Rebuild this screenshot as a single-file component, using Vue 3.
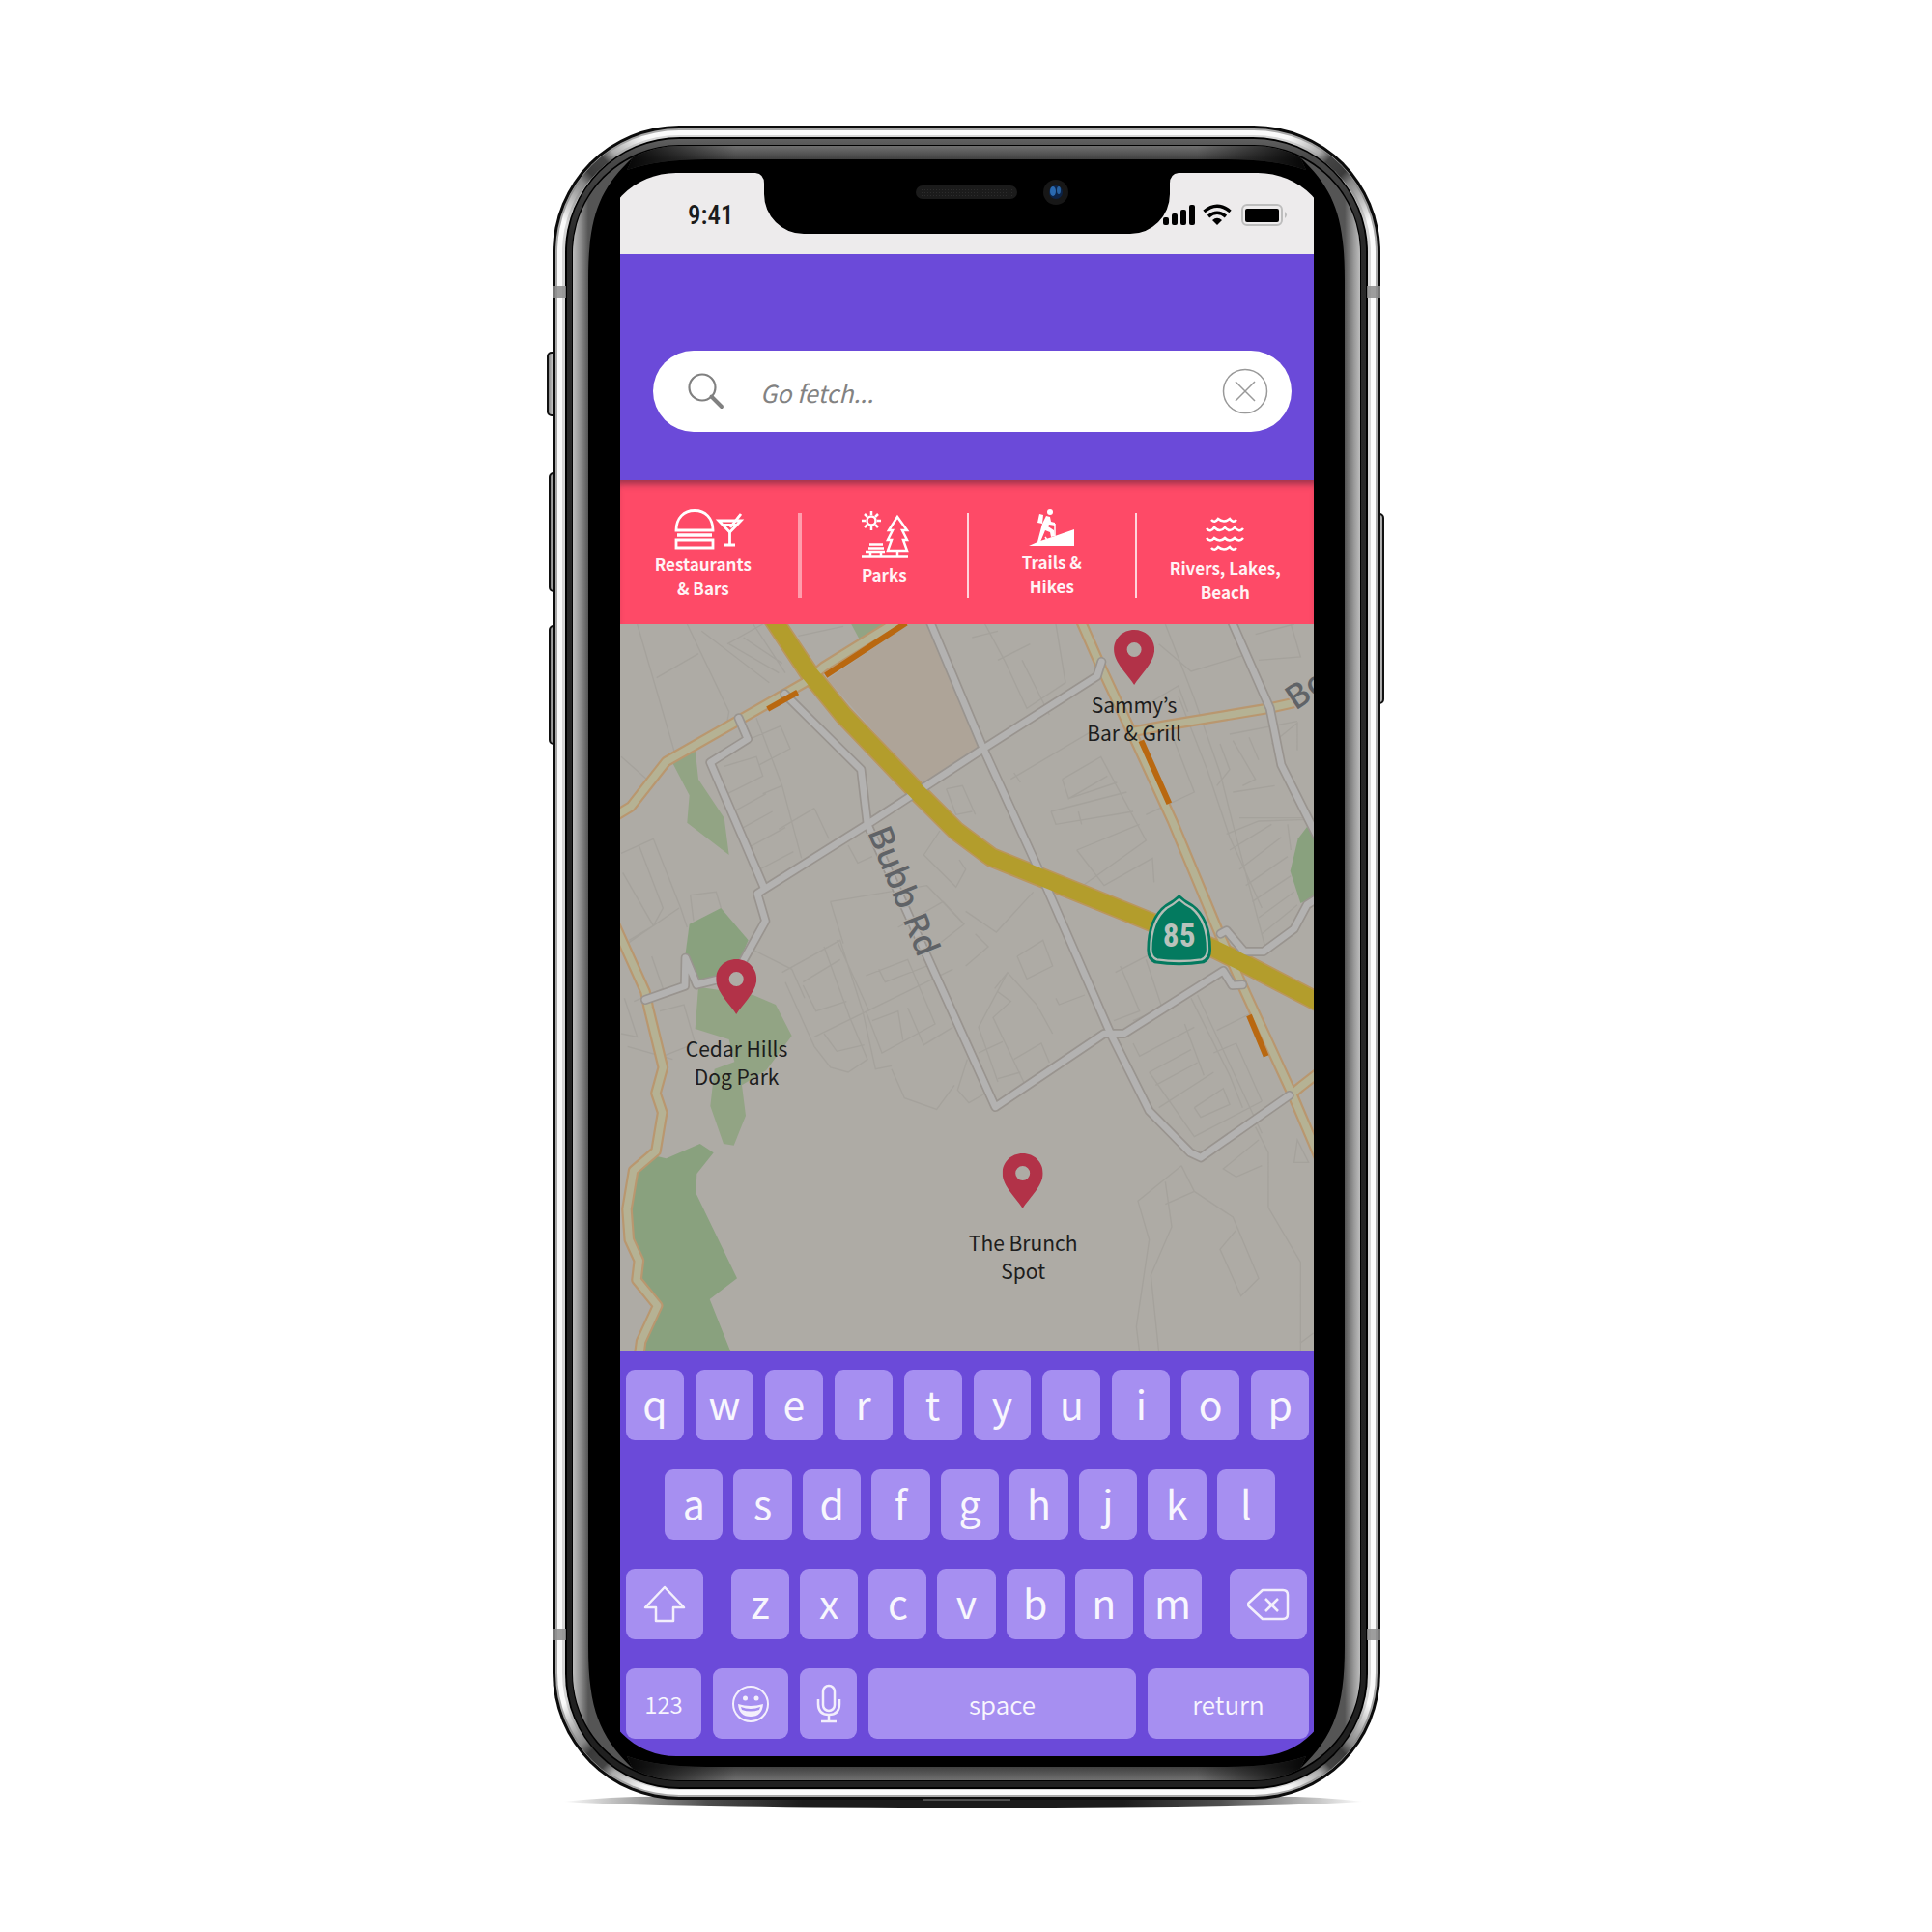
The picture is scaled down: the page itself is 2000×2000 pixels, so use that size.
<script setup>
import { ref } from 'vue'

const query = ref('')

const letterRows = {
  top: [...'qwertyuiop'],
  home: [...'asdfghjkl'],
  bottom: [...'zxcvbnm']
}

const places = [
  { id: 'sammys', lines: ['Sammy’s', 'Bar & Grill'], left: '74.1%', top: '6px', close: true },
  { id: 'cedar', lines: ['Cedar Hills', 'Dog Park'], left: '16.8%', top: '347px', close: false },
  { id: 'brunch', lines: ['The Brunch', 'Spot'], left: '58.1%', top: '548px', close: false }
]

const corners = ['', 'translate(2001 0) scale(-1 1)', 'translate(0 1993) scale(1 -1)', 'translate(2001 1993) scale(-1 -1)']

const parks = [
  'M715 0L750 65L860 0Z',
  'M170 450L240 410L250 500L330 620L345 735L215 635L222 550Z',
  'M250 1145L420 1170L490 1200L540 1297L460 1405L385 1450L397 1545L360 1637L328 1632L287 1515L300 1400L362 1378L345 1308L240 1275Z'
]
const woods = [
  'M222 950L320 900L405 1000L370 1080L340 1120L255 1125L210 1040Z',
  'M118 1670L150 1678L255 1632L297 1660L245 1725L242 1785L370 2050L285 2115L355 2290H70L123 2135L60 2050L30 1850L50 1720Z',
  'M2140 648L2170 680V860L2120 885L2088 785L2112 685Z'
]
const lanes = [
  'M60 18L180 430M215 18L345 290L340 320M120 185L250 110M345 80L500 170M10 430L90 500M260 40L470 200M340 80L450 18M420 18L520 170M390 60L510 140M560 55L700 25',
  'M430 310L510 520L450 545M510 520L570 745M330 460L430 430L450 490L340 545M460 545L360 600M480 600L380 655M520 650L410 710M610 590L655 685M610 590L500 655M545 725L440 780M410 375L505 335L535 405L440 455',
  'M10 730L110 685L195 900L215 960M65 705L140 900L110 955M15 790L110 955L35 1000M225 860L305 850L320 900M225 860L235 940M30 1010L190 900M105 1050L140 1150L50 1190',
  'M660 880L960 830L1075 950L960 1040M660 880L700 1010M400 1020L540 1090L580 1180M510 1100L690 1000L760 1220L800 1400L850 1390M575 1130L690 1060M640 1020L720 1240L775 1370L715 1410L660 1395L610 1330L520 1130M680 1000L780 1220M575 1140L615 1220L710 1190M610 1300L1040 1090',
  'M770 1110L900 1060L985 1260L820 1350L770 1220M810 1090L830 1130L960 1080M900 1210L950 1325L1040 1270M790 1250L870 1220L885 1310M640 1290L680 1345L765 1325M850 1400L890 1490L990 1525L1045 1450M1085 1370L1055 1465L1090 1505L1150 1470',
  'M715 705L745 760L790 740M950 735L1000 660M950 735L1050 835L1080 780L1060 750M1020 530L1070 520L1110 610M1020 530L1050 610L1100 600M870 960L1010 880L1075 950M30 1330L170 1370M20 1180L60 1300L10 1290M130 1220L205 1200L240 1320L140 1360',
  'M1140 18L1200 130L1270 280L1390 200L1360 18M1180 130L1280 80M1255 130L1340 300M1100 60L1180 40M1220 500L1490 340M1230 480L1250 510M1380 500L1500 430L1640 690L1430 840M1380 500L1400 560L1520 490M1400 560L1550 510M1345 600L1580 540M1345 600L1360 640L1600 600M1430 600L1440 640M1425 720L1620 640M1425 720L1510 830L1660 745L1665 820',
  'M1700 18L1790 250L1870 480L1910 640L1960 830L2010 1020M1680 80L1780 165L1960 110M1740 240L1830 470L1900 680L2000 900M1720 360L1790 540L1640 610M1640 270L1740 210L1770 290M1900 360L2110 320M1870 390L1900 470L1860 520M1910 380L1980 500L1940 520M1960 370L1990 440M2030 390L2110 325V410M1910 540L2040 520M1930 620L2140 620M1890 670L1990 630L2140 625M1900 720L2030 640M1930 780L2060 680M1950 830L2080 740M1970 880L2090 800M1990 930L2100 850M2000 980L2110 890M2090 18L2120 120L1990 130M1980 50L2100 18M2080 640L2090 720',
  'M1080 910L1175 975L1290 850M1080 1080L1150 1020L1110 980M1170 1150L1210 1100L1300 1200L1350 1290M1240 1050L1320 1000L1350 1080L1270 1120L1240 1050M1210 1100L1120 1270L1180 1440M1180 1160L1220 1190L1165 1240L1260 1440M1120 1350L1195 1315M1230 1370L1315 1320L1340 1380M1360 1180L1370 1200L1450 1170M1545 1100L1660 1040M1560 1080L1620 1220L1540 1250M1640 1060L1690 1210L1600 1250M1180 1430L1250 1410',
  'M1600 1320L1620 1360L1790 1270M1650 1410L1780 1340M1670 1450L1800 1380M1680 1520L1850 1410M1650 1410L1790 1610L2000 1500M1760 1260L1820 1420M1780 1180L1900 1420L1940 1520M1800 1170L2000 1600M1850 1350L1920 1320L2000 1500M1790 1520L1880 1460L1900 1510L1810 1550L1790 1520M1860 1280L1960 1230',
  'M1750 1700L1615 1810L1650 1930L1610 2200L1620 2280M1700 1750L1720 1890L1655 2040L1680 2280M1750 1700L1790 1780L1700 1820M1790 1780L1910 1860L1990 2050L1935 2105L1870 1960L1920 1900M1980 1580L2020 1660V1830L2120 2000V2280M1990 1620L1880 1710L1920 1735L2000 1700M2110 1620L2100 1690H2145ZM2120 2250L2160 2220'
]
const greyRoads = [
  'M375 310L403 375L287 448L452 832',
  'M390 1062L458 940L433 855L775 640L1135 405L1488 180L1502 135',
  'M85 1185L208 1142L210 1055L245 1138L310 1122',
  'M518 235L755 470L775 640L1172 1518L1510 1290L1572 1290L1880 1095L1908 1140L1940 1138',
  'M965 0L1135 405L1320 810L1530 1290L1650 1530L1778 1660L1810 1675L2085 1482',
  'M1902 0L2025 280L2060 455L2170 675',
  'M1872 980L1890 970L1945 1035H2005L2100 965L2140 890L2175 868'
]
const creamRoads = [
  'M-10 615L40 585L150 445L580 200L640 150L870 8',
  'M1434 0L1502 155L1614 395L1722 630L1870 985L1950 1165L2095 1480L2180 1680',
  'M1600 352L1700 333L2020 280L2100 262',
  'M-10 950L85 1160L95 1210L140 1395L118 1475L138 1535L118 1655L48 1715L28 1835L35 1930L65 1995L58 2055L123 2135L72 2245L66 2290',
  'M2090 1480L2120 1455L2180 1408'
]
const highway = 'M480 0L590 165L700 300L930 540L1050 660L1160 742L1660 945L1850 1025L1960 1080L2190 1200'
const traffic = 'M645 178L895 14M465 282L558 230M1625 380L1712 575M1960 1233L2013 1360'
</script>

<template>
  <main class="page">
    <div class="device">
      <svg class="frame" viewBox="560 120 880 1760" preserveAspectRatio="none" aria-hidden="true">
        <defs>
          <linearGradient id="sideL" gradientUnits="userSpaceOnUse" x1="593" x2="609" y1="0" y2="0">
            <stop offset="0" stop-color="#bdbdbd" /><stop offset=".4" stop-color="#999" /><stop offset="1" stop-color="#555" />
          </linearGradient>
          <linearGradient id="sideR" gradientUnits="userSpaceOnUse" x1="1408" x2="1392" y1="0" y2="0">
            <stop offset="0" stop-color="#bdbdbd" /><stop offset=".4" stop-color="#999" /><stop offset="1" stop-color="#555" />
          </linearGradient>
          <linearGradient id="bandT" gradientUnits="userSpaceOnUse" x1="0" x2="0" y1="151" y2="165">
            <stop offset="0" stop-color="#707070" /><stop offset="1" stop-color="#404040" />
          </linearGradient>
          <linearGradient id="bandFade" x1="0" x2="1" y1="0" y2="0">
            <stop offset="0" stop-color="#000" stop-opacity=".9" /><stop offset=".16" stop-color="#000" stop-opacity="0" />
            <stop offset=".84" stop-color="#000" stop-opacity="0" /><stop offset="1" stop-color="#000" stop-opacity=".9" />
          </linearGradient>
          <linearGradient id="ring" x1="0" x2="0" y1="0" y2="1">
            <stop offset="0" stop-color="#606060" /><stop offset=".01" stop-color="#4a4a4a" />
            <stop offset=".06" stop-color="#2a2a2a" /><stop offset="1" stop-color="#202020" />
          </linearGradient>
          <linearGradient id="glint" gradientUnits="userSpaceOnUse" x1="580" y1="225" x2="665" y2="140">
            <stop offset="0" stop-color="#777" stop-opacity="0" /><stop offset=".35" stop-color="#888" />
            <stop offset=".45" stop-color="#3a3a3a" /><stop offset=".62" stop-color="#444" />
            <stop offset=".72" stop-color="#999" stop-opacity=".8" /><stop offset="1" stop-color="#999" stop-opacity="0" />
          </linearGradient>
          <linearGradient id="ground" x1="0" x2="1" y1="0" y2="0">
            <stop offset="0" stop-color="#222" stop-opacity="0" /><stop offset=".18" stop-color="#222" stop-opacity=".8" />
            <stop offset=".3" stop-color="#1c1c1c" /><stop offset=".7" stop-color="#1c1c1c" />
            <stop offset=".82" stop-color="#222" stop-opacity=".8" /><stop offset="1" stop-color="#222" stop-opacity="0" />
          </linearGradient>
          <linearGradient id="knob" x1="0" x2="1" y1="0" y2="0">
            <stop offset="0" stop-color="#777" /><stop offset=".5" stop-color="#d8d8d8" /><stop offset="1" stop-color="#999" />
          </linearGradient>
        </defs>
        <path d="M582 1865Q640 1859 700 1860H1300Q1360 1859 1412 1865Q1300 1872 1000 1872Q700 1872 582 1865Z" fill="url(#ground)" />
        <g fill="url(#knob)" stroke="#111" stroke-width="2">
          <rect x="567" y="365" width="12" height="65" rx="4" />
          <rect x="569" y="490" width="12" height="122" rx="4" />
          <rect x="569" y="648" width="12" height="122" rx="4" />
          <rect x="1420" y="532" width="12" height="196" rx="4" />
        </g>
        <rect x="572" y="130" width="857" height="1733" rx="131" fill="#0c0c0c" />
        <rect x="575" y="133" width="851" height="1727" rx="128" fill="#a8a8a8" />
        <rect x="577" y="135" width="847" height="1723" rx="126" fill="#fafafa" />
        <rect x="582" y="140" width="837" height="1713" rx="121" fill="#d6d6d6" />
        <path v-for="(t, i) in corners" :key="i" :transform="t" d="M580 262A123 123 0 0 1 703 138" fill="none" stroke="url(#glint)" stroke-width="9" />
        <rect x="585" y="142" width="831" height="1710" rx="119" fill="#000" />
        <rect x="587" y="144" width="827" height="1706" rx="116" fill="url(#ring)" />
        <rect x="592" y="150" width="817" height="1694" rx="111" fill="#000" />
        <g v-for="t in ['', 'translate(0 1994) scale(1 -1)']" :key="t" :transform="t">
          <path d="M655 163Q678 151 703 151H1298Q1323 151 1346 163L1352 176Q1320 165 1270 165H731Q681 165 649 176Z" fill="url(#bandT)" />
          <path d="M655 163Q678 151 703 151H1298Q1323 151 1346 163L1352 176Q1320 165 1270 165H731Q681 165 649 176Z" fill="url(#bandFade)" />
        </g>
        <path d="M593 262A110 110 0 0 1 655 163C620 196 609 225 609 290V1704C609 1768 620 1797 655 1831A110 110 0 0 1 593 1732Z" fill="url(#sideL)" />
        <path d="M1408 262A110 110 0 0 0 1346 163C1381 196 1392 225 1392 290V1704C1392 1768 1381 1797 1346 1831A110 110 0 0 0 1408 1732Z" fill="url(#sideR)" />
        <g fill="#8c8c8c" fill-opacity=".85">
          <rect x="572" y="296" width="14" height="12" /><rect x="1415" y="296" width="14" height="12" />
          <rect x="572" y="1686" width="14" height="12" /><rect x="1415" y="1686" width="14" height="12" />
        </g>
        <path d="M955 1863H1046" stroke="#888" stroke-width="1" />
      </svg>

      <div class="screen">
        <div class="status">
          <time class="clock">9:41</time>
          <svg class="notch" viewBox="782 179 438 63" aria-hidden="true">
            <path d="M782 179Q791 180 791 190V201A41 41 0 0 0 832 242H1170A41 41 0 0 0 1211 201V190Q1211 180 1220 179Z" fill="#000" />
            <rect x="948" y="192" width="105" height="14" rx="7" fill="#1b1b1b" />
            <path d="M954 196.500H1048M954 199.500H1048M954 202.500H1048" stroke="#2c2c2c" stroke-dasharray="1 2" />
            <circle cx="1093" cy="199" r="13" fill="#171717" />
            <circle cx="1093" cy="199" r="7" fill="#0c2347" />
            <ellipse cx="1090" cy="198" rx="3" ry="5" fill="#2a69b0" /><ellipse cx="1096" cy="197" rx="2" ry="4" fill="#28619f" />
          </svg>
          <svg class="signals" viewBox="0 0 130 24" role="img" aria-label="Signal, Wi-Fi and battery">
            <g fill="#000">
              <rect x="1" y="14" width="6" height="8" rx="2" /><rect x="10" y="10" width="6" height="12" rx="2" />
              <rect x="19" y="6" width="6" height="16" rx="2" /><rect x="28" y="1" width="6" height="21" rx="2" />
              <path d="M52 17Q57 12.500 62 17L57 22Z" />
              <rect x="86" y="5" width="35" height="14" rx="2" />
            </g>
            <path d="M43.500 8Q57-3.500 70.500 8M48 13Q57 5.500 66 13" fill="none" stroke="#000" stroke-width="3.600" />
            <rect x="83" y="1" width="41" height="21" rx="5" fill="none" stroke="#bdbdbd" stroke-width="2" />
            <path d="M127 8Q131 11.500 127 15Z" fill="#bdbdbd" />
          </svg>
        </div>

        <header class="header">
          <form class="search" role="search" @submit.prevent>
            <svg class="glass" viewBox="0 0 38 38" aria-hidden="true">
              <circle cx="15" cy="15" r="13.500" fill="none" stroke="#808080" stroke-width="2.200" />
              <path d="M24.500 24.500L35 35" stroke="#808080" stroke-width="4" stroke-linecap="round" />
            </svg>
            <input v-model="query" class="field" type="text" aria-label="Search places" placeholder="Go fetch..." />
            <button class="clear" type="button" aria-label="Clear search" @click="query = ''">
              <svg viewBox="0 0 48 48" aria-hidden="true">
                <g fill="none" stroke="#999" stroke-width="1.500"><circle cx="24" cy="24" r="22.500" /><path d="M14 14L34 34M34 14L14 34" /></g>
              </svg>
            </button>
          </form>
        </header>

        <nav class="categories" aria-label="Categories">
          <a class="category outer-left" href="#food">
            <svg width="89" height="44" viewBox="684 527 89 44" aria-hidden="true">
              <g fill="none" stroke="#fff" stroke-width="2.800">
                <path d="M701 549C701 536 709 528.500 720 528.500S739 536 739 549Z" /><path d="M702 554H738" stroke-width="3.500" /><path d="M701 559H739V567H701Z" />
                <path d="M745 539H768L756.500 551Z" /><path d="M748 543H764" stroke-width="2" /><path d="M756.500 551V564M751 564H762M757 546L768 532" />
              </g>
            </svg>
            <span>Restaurants<br />&amp; Bars</span>
          </a>
          <i class="divider wide"></i>
          <a class="category" href="#parks">
            <svg width="60" height="55" viewBox="884 527 60 55" aria-hidden="true">
              <g fill="none" stroke="#fff" stroke-width="2.500">
                <circle cx="901" cy="539" r="4.500" />
                <path d="M901 529V533M901 545V549M891 539H895M907 539H911M894 532L897 535M905 543L908 546M908 532L905 535M897 543L894 546" />
                <path d="M928 535L919 549H923L918 559H922L918 570H938L934 559H938L933 549H938Z" /><path d="M928 570V576M891 576.500H939M899 563.500H913M898 567.500H914M895 571H915M900 571V576M911 571V576" />
              </g>
            </svg>
            <span>Parks</span>
          </a>
          <i class="divider"></i>
          <a class="category" href="#trails">
            <svg width="60" height="42" viewBox="1058 527 60 42" aria-hidden="true">
              <path d="M1064 565L1073 561L1091 555L1111 548V565Z" fill="#fff" /><circle cx="1086" cy="530" r="3" fill="#fff" />
              <path d="M1075 532L1079 533L1078 542L1073 541Z" fill="#fff" />
              <path d="M1082 534L1086 535L1087 540L1091 541V544L1085 543L1084 545L1090 549L1091 555L1087 556L1086 551L1081 549L1076 561H1073L1078 542Z" fill="#fff" />
              <path d="M1091 542V555M1083 559L1081 556" stroke="#fff" stroke-width="1.500" />
            </svg>
            <span>Trails &amp;<br />Hikes</span>
          </a>
          <i class="divider"></i>
          <a class="category outer-right" href="#water">
            <svg width="46" height="48" viewBox="1247 527 46 48" aria-hidden="true">
              <g fill="none" stroke="#fff" stroke-width="2.500">
                <path d="M1256 538Q1259.500 542 1263 537Q1269 542 1275 537Q1278.500 542 1282 538" />
                <path d="M1251 547Q1255 552 1259 546Q1265 552 1270 546Q1275 552 1280 546Q1285 552 1289 547" />
                <path d="M1251 557Q1255 562 1259 557Q1265 562 1270 557Q1275 562 1280 557Q1285 562 1289 557" />
                <path d="M1256 567Q1259.500 571 1263 566Q1269 571 1275 566Q1278.500 571 1282 567" />
              </g>
            </svg>
            <span>Rivers, Lakes,<br />Beach</span>
          </a>
        </nav>

        <section class="map" aria-label="Map">
          <svg class="streets" viewBox="7 18 2154 2259" preserveAspectRatio="xMidYMid slice">
            <path d="M650 190L930 0H960L1135 395L945 520Z" fill="#aea498" />
            <g fill="none" stroke="#a5a29c" stroke-width="4"><path v-for="d in lanes" :key="d" :d="d" /></g>
            <g fill="#92a484"><path v-for="d in parks" :key="d" :d="d" /></g>
            <g fill="#89a17e"><path v-for="d in woods" :key="d" :d="d" /></g>
            <g fill="none" stroke-linejoin="round">
              <g stroke="#b9976f" stroke-width="35"><path v-for="d in creamRoads" :key="d" :d="d" /></g>
              <path :d="highway" stroke="#ba965c" stroke-width="62" />
              <g stroke="#b5b294" stroke-width="22"><path v-for="d in creamRoads" :key="d" :d="d" /></g>
              <g stroke-linecap="round">
                <g stroke="#99948f" stroke-width="30"><path v-for="d in greyRoads" :key="d" :d="d" /></g>
                <g stroke="#b3b2b1" stroke-width="20"><path v-for="d in greyRoads" :key="d" :d="d" /></g>
              </g>
              <path :d="highway" stroke="#b39d2c" stroke-width="52" />
              <path :d="traffic" stroke="#b96810" stroke-width="18" />
            </g>
            <g class="road-name">
              <text transform="translate(774 664) rotate(68)">Bubb Rd</text>
              <text transform="translate(2104 288) rotate(-34)">Bo</text>
            </g>
            <path d="M1743 858Q1760 875 1785 888Q1843 930 1843 1030Q1843 1062 1820 1072Q1743 1084 1666 1072Q1643 1062 1643 1030Q1643 930 1701 888Q1726 875 1743 858Z" fill="#037a5f" />
            <path d="M1743 873Q1762 890 1782 900Q1831 940 1831 1028Q1831 1052 1812 1060Q1743 1070 1674 1060Q1655 1052 1655 1028Q1655 940 1704 900Q1724 890 1743 873Z" fill="none" stroke="#b4bdb6" stroke-width="7" />
            <text class="route" x="1743" y="1020">85</text>
          </svg>
          <a v-for="p in places" :key="p.id" class="place" :class="{ close: p.close }" :style="{ left: p.left, top: p.top }" :href="'#' + p.id">
            <svg width="42" height="57" viewBox="0 0 42 57" aria-hidden="true">
              <path fill-rule="evenodd" fill="#b23248" d="M21 0C9 0 0 9 0 20.500C0 34 15 47 21 57C27 47 42 34 42 20.500C42 9 33 0 21 0ZM21 13A7.500 7.500 0 1 1 21 28A7.500 7.500 0 1 1 21 13Z" />
            </svg>
            <span>{{ p.lines[0] }}<br />{{ p.lines[1] }}</span>
          </a>
        </section>

        <div class="keyboard">
          <div class="row"><button v-for="k in letterRows.top" :key="k" class="key" type="button">{{ k }}</button></div>
          <div class="row home"><button v-for="k in letterRows.home" :key="k" class="key" type="button">{{ k }}</button></div>
          <div class="row split">
            <button class="key side" type="button" aria-label="Shift">
              <svg width="46" height="40" viewBox="0 0 44 40" aria-hidden="true"><path d="M22 2L42 23H31V37H13V23H2Z" fill="none" stroke="#f3effc" stroke-width="2.500" stroke-linejoin="round" /></svg>
            </button>
            <div class="cluster"><button v-for="k in letterRows.bottom" :key="k" class="key" type="button">{{ k }}</button></div>
            <button class="key side" type="button" aria-label="Delete">
              <svg width="44" height="40" viewBox="0 0 44 40" aria-hidden="true">
                <path d="M16 5H37Q42 5 42 10V30Q42 35 37 35H16L2 22Q0 20 2 18Z" fill="none" stroke="#f3effc" stroke-width="2.500" stroke-linejoin="round" />
                <path d="M19 14L32 27M32 14L19 27" stroke="#f3effc" stroke-width="2.500" />
              </svg>
            </button>
          </div>
          <div class="row">
            <button class="key word num" type="button">123</button>
            <button class="key word num" type="button" aria-label="Emoji">
              <svg width="40" height="40" viewBox="0 0 40 40" aria-hidden="true">
                <circle cx="20" cy="20" r="18" fill="none" stroke="#f3effc" stroke-width="2" />
                <g fill="#f3effc"><circle cx="14.500" cy="14" r="2.500" /><circle cx="26" cy="14" r="2.500" />
                  <path fill-rule="evenodd" d="M7 20Q20 24 33 20Q32 33 20 33Q8 33 7 20ZM10 23Q20 27 30 23L29 26Q20 29 11 26Z" /></g>
              </svg>
            </button>
            <button class="key word mic" type="button" aria-label="Dictate">
              <svg width="30" height="42" viewBox="0 0 30 42" aria-hidden="true">
                <g fill="none" stroke="#f3effc" stroke-width="2.500"><rect x="9" y="2" width="12" height="26" rx="6" /><path d="M4 16V21Q4 32 15 32T26 21V16M15 32V39M7 39H23" /></g>
              </svg>
            </button>
            <button class="key word space" type="button">space</button>
            <button class="key word return" type="button">return</button>
          </div>
        </div>
      </div>
    </div>
  </main>
</template>

<style>
body {
  margin: 0;
  background: #fff;
}
</style>

<style scoped>
.page {
  box-sizing: border-box;
  min-height: 100vh;
  padding: 120px 0;
  display: flex;
  justify-content: center;
  align-items: flex-start;
  font-family: "Noto Sans CJK KR", "Noto Sans", sans-serif;
}
.device {
  position: relative;
  box-sizing: border-box;
  width: 100%;
  max-width: 880px;
  padding: 59px 80px 62px 82px;
}
.frame {
  position: absolute;
  inset: 0;
  width: 100%;
  height: 100%;
}
.screen {
  position: relative;
  clip-path: inset(0 -21px round 79px);
}
.status {
  position: relative;
  box-sizing: border-box;
  height: 84px;
  padding: 3px 27px 0 70px;
  display: flex;
  align-items: center;
  justify-content: space-between;
  background: #edebec;
}
.clock {
  font: 500 27px/32px "Roboto Condensed", "Liberation Sans Narrow", Roboto, sans-serif;
  color: #1b1b1b;
}
.notch {
  position: absolute;
  top: 0;
  left: 50%;
  width: 438px;
  height: 63px;
  transform: translateX(-50%);
}
.signals {
  position: relative;
  width: 130px;
  height: 24px;
}
.header {
  padding: 100px 23px 50px 34px;
  background: #6b4ad9;
}
.search {
  box-sizing: border-box;
  height: 84px;
  padding: 0 24px 0 36px;
  display: flex;
  align-items: center;
  border-radius: 42px;
  background: #fff;
}
.glass {
  flex: none;
  width: 38px;
  height: 38px;
  margin-right: 37px;
}
.field {
  flex: 1;
  min-width: 0;
  padding: 2px 0 0;
  border: 0;
  outline: 0;
  background: none;
  font: italic 400 25px/40px "Noto Sans CJK KR", "Noto Sans", sans-serif;
  color: #555;
}
.field::placeholder {
  color: #828282;
  opacity: 1;
}
.clear {
  flex: none;
  width: 48px;
  height: 48px;
  padding: 0;
  border: 0;
  background: none;
}
.clear svg {
  display: block;
}
.categories {
  box-sizing: border-box;
  height: 149px;
  padding-top: 30px;
  display: flex;
  background: #fe4a67;
  box-shadow: inset 0 8px 7px -4px rgba(60, 30, 50, 0.5);
}
.category {
  flex: 172;
  display: flex;
  flex-direction: column;
  align-items: center;
  text-align: center;
  text-decoration: none;
  white-space: nowrap;
  font-size: 17px;
  line-height: 25px;
  font-weight: 700;
  color: #fff3f5;
}
.category svg {
  flex: none;
}
.outer-left {
  flex: 172;
  padding-right: 12px;
}
.outer-right {
  flex: 184;
}
.divider {
  width: 2px;
  height: 88px;
  margin-top: 4px;
  background: #ffd5dc;
}
.divider.wide {
  width: 4px;
  background: #ff9dac;
}
.map {
  position: relative;
  height: 753px;
  overflow: hidden;
  background: #aeaba5;
}
.streets {
  display: block;
  width: 100%;
  height: 100%;
}
.road-name {
  font: 500 105px "Noto Sans", sans-serif;
  fill: #606367;
  stroke: #aeaba5;
  stroke-width: 8px;
  paint-order: stroke;
}
.route {
  font: 700 100px "Roboto Condensed", "Liberation Sans", sans-serif;
  text-anchor: middle;
  fill: #b9c2bc;
}
.place {
  position: absolute;
  display: flex;
  flex-direction: column;
  align-items: center;
  gap: 21px;
  transform: translateX(-50%);
  text-align: center;
  text-decoration: none;
  white-space: nowrap;
  font-size: 21px;
  line-height: 29px;
  color: #1d1d1d;
}
.place.close {
  gap: 6px;
}
.keyboard {
  padding: 19px 5px 18px 6px;
  display: flex;
  flex-direction: column;
  gap: 30px;
  background: #6b4ad9;
}
.row {
  display: flex;
  gap: 12px;
}
.row.home {
  gap: 11px;
  padding: 0 35px 0 40px;
}
.row.split {
  gap: 29px;
  padding-right: 2px;
}
.cluster {
  flex: 1;
  display: flex;
  gap: 11px;
}
.key {
  flex: 1;
  min-width: 0;
  height: 73px;
  padding: 0 0 6px;
  display: flex;
  align-items: center;
  justify-content: center;
  border: 0;
  border-radius: 9px;
  background: #a68ff1;
  font: 400 41px/64px "Noto Sans CJK KR", "Noto Sans", sans-serif;
  color: #f8f6fe;
}
.key.side {
  flex: 0 0 80px;
  padding: 0;
}
.key.word {
  padding: 0;
  font-size: 26px;
  font-weight: 350;
}
.key.num {
  flex: 78;
}
.key.num {
  font-size: 24px;
}
.key.mic {
  flex: 59;
}
.key.space {
  flex: 277;
}
.key.return {
  flex: 167;
}
</style>
